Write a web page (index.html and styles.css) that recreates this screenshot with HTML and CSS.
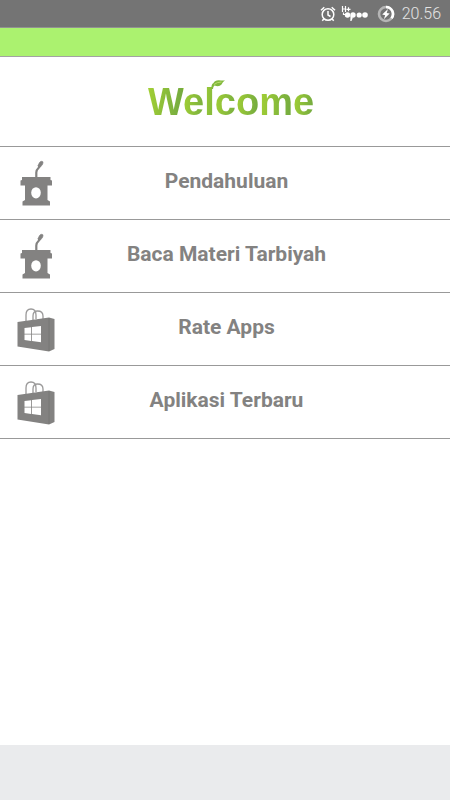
FILE: index.html
```html
<!DOCTYPE html>
<html lang="id">
<head>
<meta charset="utf-8">
<meta name="viewport" content="width=device-width, initial-scale=1">
<title>Welcome</title>
<link rel="stylesheet" href="styles.css">
</head>
<body>
<svg class="sprite" aria-hidden="true">
  <symbol id="podium" viewBox="0 0 48 54">
    <path d="M28.300 26V18.500Q28.300 16 30.500 14L32 11" fill="none" stroke="#838281" stroke-width="2.200"/>
    <path d="M29.800 12 31.500 8.500Q33 6.500 34.700 7.500Q35.500 8.500 34.500 10.500L32 13.500Z" stroke="#838281" stroke-width=".6"/>
    <path d="M14 23H42.500V26L44 26.500V31.500H39.500V46L42 47.500V51.500H14.500V47.500L17 46V31.500H12.500V26.500L14 26Z"/>
    <ellipse cx="28" cy="38.800" rx="4.800" ry="5.600" fill="#fff"/>
  </symbol>
  <symbol id="bag" viewBox="0 0 48 54">
    <path d="M18 21V15Q18 9 23 9Q28 9 28 15V19M25 20V16Q25 11 29.500 11Q35 11 35 16V19" fill="none" stroke="#9a9999" stroke-width="1.300"/>
    <path d="M9.500 22 41 17.500 46.500 19V49L41 51.500 9.500 46.500Z"/>
    <path d="M41 18V51" stroke="#777675" stroke-width="1"/>
    <path d="M16.500 28 23.200 27.200V33.700H16.500ZM24 27.100 33 26V33.700H24ZM16.500 34.500H23.200V41L16.500 40ZM24 34.500H33V42.300L24 41.100Z" fill="#fff"/>
  </symbol>
</svg>
<div class="screen">
  <div class="status">
    <svg class="alarm" viewBox="0 0 16 16" fill="none" stroke="#fff" stroke-width="1.500">
      <circle cx="8" cy="8.500" r="5.800"/>
      <path d="M1 4.300 4.300 1.200M15 4.300 11.700 1.200M8 5V9L10.500 10.500M3.800 13 2.300 14.700M12.200 13 13.700 14.700"/>
    </svg>
    <svg class="signal" viewBox="0 0 28 18" fill="#fff">
      <path d="M1.500 1V7M4.500 1V7M1.500 4H4.500M5.500 4.300H9.500M7.500 2.300V6.300M2.500 7.500V9.500H5" fill="none" stroke="#fff" stroke-width="1.200"/>
      <circle cx="6.500" cy="10" r="2.700"/><circle cx="12" cy="10" r="2.700"/>
      <circle cx="18.200" cy="10" r="2.600"/><circle cx="24" cy="10" r="2.800"/>
      <path d="M9.500 10.500H11.500V13.500L10.500 16H9.300Z"/>
    </svg>
    <svg class="battery" viewBox="0 0 18 18" fill="none">
      <circle cx="9" cy="9" r="7" stroke="#b5b5b5" stroke-width="2.600"/>
      <path d="M9 2A7 7 0 0 1 14.500 13.300" stroke="#fff" stroke-width="2.600"/>
      <path d="M11 4 5.200 9.500 8.200 10.200 6.800 14.300 12.700 8.600 9.700 8Z" fill="#fff"/>
    </svg>
    <span class="time">20.56</span>
  </div>
  <div class="accent"></div>
  <header class="header">
    <h1 class="welcome">Welcome<svg class="leaf" viewBox="0 0 16 16" aria-hidden="true">
      <path d="M.5 10V7Q1 4.500 2.500 4Q4 1 8 1.200Q12 2 14 1.200Q11.500 3 10.500 5.500Q8 8.500 3.500 6.500Q2 7.500 2 10Z" fill="#82b93d"/>
      <path d="M3 5.500Q6 3 10.500 3" fill="none" stroke="#bddc6c" stroke-width="1"/>
    </svg></h1>
  </header>
  <nav class="menu">
    <a class="item" href="#"><svg class="icon" aria-hidden="true"><use href="#podium"/></svg><span class="label">Pendahuluan</span></a>
    <a class="item" href="#"><svg class="icon" aria-hidden="true"><use href="#podium"/></svg><span class="label">Baca Materi Tarbiyah</span></a>
    <a class="item" href="#"><svg class="icon" aria-hidden="true"><use href="#bag"/></svg><span class="label">Rate Apps</span></a>
    <a class="item" href="#"><svg class="icon" aria-hidden="true"><use href="#bag"/></svg><span class="label">Aplikasi Terbaru</span></a>
  </nav>
  <footer class="footer"></footer>
</div>
</body>
</html>
```
FILE: styles.css
```css
* {
  box-sizing: border-box;
}

body {
  margin: 0;
  background: #fff;
  font-family: Roboto, sans-serif;
}

.sprite {
  position: absolute;
  width: 0;
  height: 0;
}

.screen {
  display: flex;
  flex-direction: column;
  min-height: 100vh;
}

.status {
  display: flex;
  align-items: center;
  justify-content: flex-end;
  height: 28px;
  padding-right: 9px;
  background: #747474;
  border-bottom: 1px solid #929292;
}

.alarm {
  width: 16px;
  height: 16px;
  margin-right: 5px;
}

.signal {
  width: 28px;
  height: 18px;
  margin-right: 8px;
}

.battery {
  width: 18px;
  height: 18px;
  margin-right: 7px;
}

.time {
  color: #e4e4e4;
  font-size: 16px;
  font-weight: 300;
  line-height: 30px;
}

.accent {
  height: 29px;
  background: #abf26f;
  border-bottom: 1px solid #a3a3a3;
}

.header {
  display: flex;
  justify-content: center;
  padding: 24px 0 23px 12px;
  border-bottom: 1px solid #999;
}

/* Each letter runs from light to dark green. */
.welcome {
  position: relative;
  margin: 0;
  font: bold 38px/42px "Liberation Sans", sans-serif;
  color: transparent;
  background: linear-gradient(95deg,
    #a3d034 0, #73aa40 36px,
    #a3d034 36px, #7ab03f 57px,
    #9ccb36 57px, #86ba3c 67px,
    #a3d034 67px, #7ab03f 89px,
    #a3d034 89px, #73aa40 112px,
    #a3d034 112px, #73aa40 146px,
    #a3d034 146px, #73aa40 167px);
  background-clip: text;
}

.leaf {
  position: absolute;
  top: -2px;
  left: 63px;
  width: 16px;
  height: 16px;
}

.menu {
  display: grid;
  grid-auto-rows: 73px;
}

.item {
  display: grid;
  grid-template-columns: 64px 1fr 64px;
  align-items: center;
  padding: 0 0 4px 3px;
  border-bottom: 1px solid #999;
  color: #838281;
  text-decoration: none;
}

.icon {
  width: 48px;
  height: 54px;
  margin-left: 5px;
  fill: #838281;
}

.label {
  font-size: 21px;
  font-weight: bold;
  line-height: 26px;
  text-align: center;
}

.footer {
  height: 55px;
  margin-top: auto;
  background: #eaebed;
}
```
